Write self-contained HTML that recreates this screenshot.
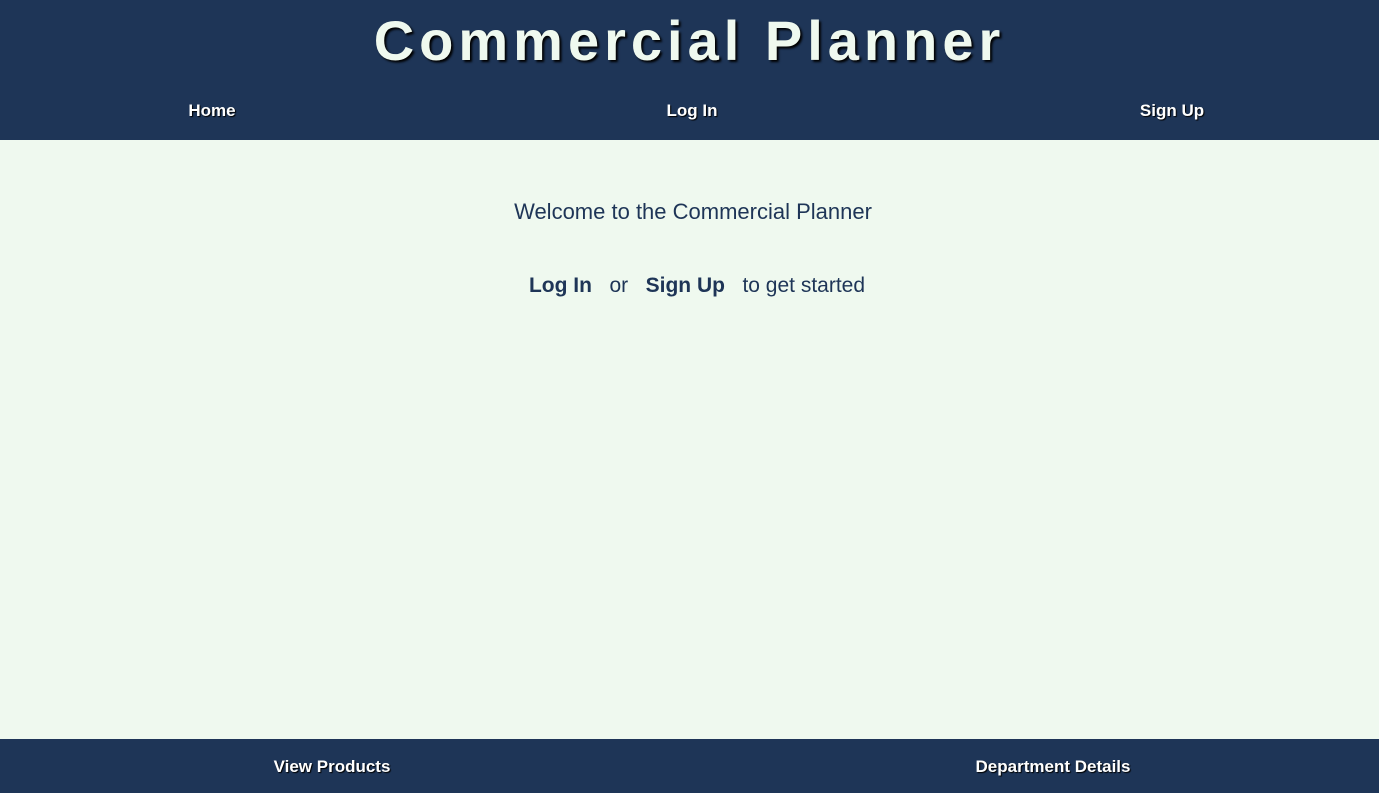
<!DOCTYPE html>
<html><head><style>
body{margin:0;width:1379px;height:793px;background:#eff9ef;font-family:"Liberation Sans",sans-serif;position:relative;overflow:hidden}
.hdr{position:absolute;top:0;left:0;width:1379px;height:140px;background:#1e3557}
h1{margin:0;position:absolute;top:8px;width:100%;text-align:center;color:#eff9ef;font-size:56px;letter-spacing:5px;font-weight:bold;text-shadow:2px 2px 2px #000;line-height:66px}
.nav{position:absolute;color:#fff;font-weight:bold;font-size:17px;text-shadow:1px 1px 1px #000;transform:translateX(-50%)}
.ftr{position:absolute;top:739px;left:0;width:1379px;height:54px;background:#1e3557}
.t{position:absolute;color:#1e3557;transform:translateX(-50%);white-space:nowrap}
</style></head><body>
<div class="hdr"><h1>Commercial Planner</h1>
<div class="nav" style="left:212px;top:101px">Home</div>
<div class="nav" style="left:692px;top:101px">Log In</div>
<div class="nav" style="left:1172px;top:101px">Sign Up</div>
</div>
<div class="t" style="left:693px;top:199px;font-size:22px">Welcome to the Commercial Planner</div>
<div class="t" style="left:697px;top:274px;font-size:21px"><b>Log In</b>&nbsp;&nbsp; or &nbsp;&nbsp;<b>Sign Up</b>&nbsp;&nbsp; to get started</div>
<div class="ftr">
<div class="nav" style="left:332px;top:18px">View Products</div>
<div class="nav" style="left:1053px;top:18px">Department Details</div>
</div>
</body></html>
